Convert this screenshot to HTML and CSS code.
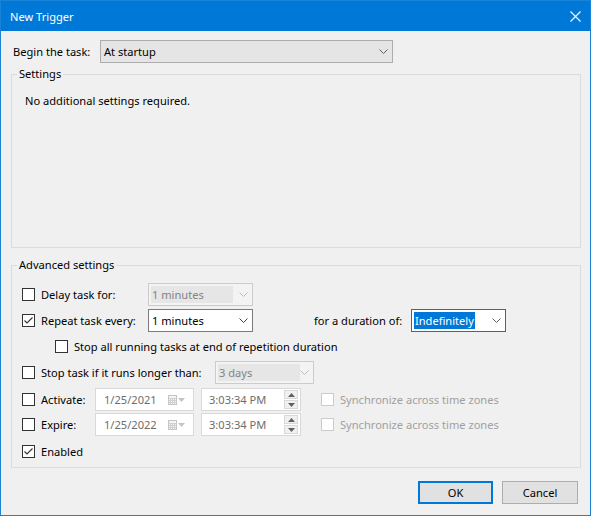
FILE: index.html
```html
<!DOCTYPE html>
<html lang="en">
<head>
  <meta charset="UTF-8">
  <title>New Trigger</title>
  <link rel="stylesheet" href="styles.css">
</head>
<body>

<div class="window">
  <!-- title bar -->
  <div class="titlebar">
    <span>New Trigger</span>
    <svg class="close" width="11" height="11" viewBox="0 0 11 11">
      <path d="M0.5 0.5 L10.5 10.5 M10.5 0.5 L0.5 10.5" stroke="#fff" stroke-width="1.1" fill="none"/>
    </svg>
  </div>

  <div class="content">
    <div class="begin-row">
      <label>Begin the task:</label>
      <div class="combo combo-begin">
        <span>At startup</span>
        <svg class="chev" width="9" height="5" viewBox="0 0 9 5"><polyline points="0.5,0.5 4.5,4.5 8.5,0.5" fill="none" stroke="#606060"/></svg>
      </div>
    </div>

    <fieldset class="group group-settings">
      <legend>Settings</legend>
      <p class="note">No additional settings required.</p>
    </fieldset>

    <fieldset class="group group-advanced">
      <legend>Advanced settings</legend>
      <div class="adv">

        <div class="row row-delay">
          <div class="check w-delay"><span class="box"></span><span>Delay task for:</span></div>
          <div class="combo combo-off w-105">
            <span class="sel">1 minutes</span>
            <svg class="chev" width="9" height="5" viewBox="0 0 9 5"><polyline points="0.5,0.5 4.5,4.5 8.5,0.5" fill="none" stroke="#bcbcbc"/></svg>
          </div>
        </div>

        <div class="row row-repeat">
          <div class="check w-delay">
            <span class="box"><svg width="11" height="11" viewBox="0 0 11 11"><polyline points="1.5,5.5 4,8 9.5,2.5" fill="none" stroke="#333" stroke-width="1.1"/></svg></span>
            <span>Repeat task every:</span>
          </div>
          <div class="combo combo-on w-105">
            <span>1 minutes</span>
            <svg class="chev" width="9" height="5" viewBox="0 0 9 5"><polyline points="0.5,0.5 4.5,4.5 8.5,0.5" fill="none" stroke="#404040"/></svg>
          </div>
          <span class="duration-label">for a duration of:</span>
          <div class="combo combo-focus">
            <span class="hilite">Indefinitely</span>
            <svg class="chev" width="9" height="5" viewBox="0 0 9 5"><polyline points="0.5,0.5 4.5,4.5 8.5,0.5" fill="none" stroke="#606060"/></svg>
          </div>
        </div>

        <div class="row row-stopall">
          <div class="check"><span class="box"></span><span>Stop all running tasks at end of repetition duration</span></div>
        </div>

        <div class="row row-stoptask">
          <div class="check w-stop"><span class="box"></span><span>Stop task if it runs longer than:</span></div>
          <div class="combo combo-off w-99">
            <span class="sel">3 days</span>
            <svg class="chev" width="9" height="5" viewBox="0 0 9 5"><polyline points="0.5,0.5 4.5,4.5 8.5,0.5" fill="none" stroke="#bcbcbc"/></svg>
          </div>
        </div>

        <div class="row row-activate">
          <div class="check w-date"><span class="box"></span><span>Activate:</span></div>
          <div class="field date">
            <span>1/25/2021</span>
            <span class="cal">
              <svg width="9" height="10" viewBox="0 0 9 10">
                <rect x="0.5" y="0.5" width="8" height="9" fill="#f4f4f4" stroke="#c4c4c4"/>
                <path d="M0.5 3.5 H8.5 M0.5 5.5 H8.5 M0.5 7.5 H8.5 M2.5 3.5 V9.5 M4.5 3.5 V9.5 M6.5 3.5 V9.5" stroke="#d0d0d0"/>
              </svg>
              <svg width="7" height="4" viewBox="0 0 7 4"><polygon points="0,0 7,0 3.5,4" fill="#c4c4c4"/></svg>
            </span>
          </div>
          <div class="field time">
            <span>3:03:34 PM</span>
            <span class="spin">
              <span class="spin-btn"><svg width="7" height="4" viewBox="0 0 7 4"><polygon points="0,4 7,4 3.5,0" fill="#606060"/></svg></span>
              <span class="spin-btn"><svg width="7" height="4" viewBox="0 0 7 4"><polygon points="0,0 7,0 3.5,4" fill="#606060"/></svg></span>
            </span>
          </div>
          <div class="check sync"><span class="box box-off"></span><span>Synchronize across time zones</span></div>
        </div>

        <div class="row row-expire">
          <div class="check w-date"><span class="box"></span><span>Expire:</span></div>
          <div class="field date">
            <span>1/25/2022</span>
            <span class="cal">
              <svg width="9" height="10" viewBox="0 0 9 10">
                <rect x="0.5" y="0.5" width="8" height="9" fill="#f4f4f4" stroke="#c4c4c4"/>
                <path d="M0.5 3.5 H8.5 M0.5 5.5 H8.5 M0.5 7.5 H8.5 M2.5 3.5 V9.5 M4.5 3.5 V9.5 M6.5 3.5 V9.5" stroke="#d0d0d0"/>
              </svg>
              <svg width="7" height="4" viewBox="0 0 7 4"><polygon points="0,0 7,0 3.5,4" fill="#c4c4c4"/></svg>
            </span>
          </div>
          <div class="field time">
            <span>3:03:34 PM</span>
            <span class="spin">
              <span class="spin-btn"><svg width="7" height="4" viewBox="0 0 7 4"><polygon points="0,4 7,4 3.5,0" fill="#606060"/></svg></span>
              <span class="spin-btn"><svg width="7" height="4" viewBox="0 0 7 4"><polygon points="0,0 7,0 3.5,4" fill="#606060"/></svg></span>
            </span>
          </div>
          <div class="check sync"><span class="box box-off"></span><span>Synchronize across time zones</span></div>
        </div>

        <div class="row row-enabled">
          <div class="check">
            <span class="box"><svg width="11" height="11" viewBox="0 0 11 11"><polyline points="1.5,5.5 4,8 9.5,2.5" fill="none" stroke="#333" stroke-width="1.1"/></svg></span>
            <span>Enabled</span>
          </div>
        </div>

      </div>
    </fieldset>

    <div class="buttons">
      <button class="btn btn-default">OK</button>
      <button class="btn btn-cancel">Cancel</button>
    </div>
  </div>
</div>

</body>
</html>
```

FILE: styles.css
```css
* {
  box-sizing: border-box;
}
body {
  margin: 0;
  font-family: "Noto Sans", sans-serif;
  font-size: 11.1px;
  color: #000;
  background-color: #f0f0f0;
}
.window {
  width: 591px;
  height: 516px;
  border: 1px solid #1883d7;
  background-color: #f0f0f0;
}
.titlebar {
  height: 30px;
  background-color: #0078d7;
  color: #fff;
  display: flex;
  align-items: center;
  justify-content: space-between;
  padding: 0 9px 0 9px;
}
.content {
  padding: 9px 9px 0 10px;
}

/* begin the task */
.begin-row {
  display: flex;
  align-items: center;
  height: 23px;
  padding-left: 2px;
}
.begin-row label {
  width: 87px;
}
.combo {
  display: flex;
  align-items: center;
  justify-content: space-between;
  height: 23px;
  border: 1px solid #adadad;
  padding: 0 4px 0 3px;
}
.combo-begin {
  width: 293px;
  background-color: #e5e5e5;
}
.combo-on {
  background-color: #fff;
  border-color: #7a7a7a;
}
.combo-off {
  background-color: #f3f3f3;
  border-color: #cccccc;
  color: #838383;
  padding-left: 2px;
}
.combo-off .sel {
  background-color: #e6e6e6;
  width: 82px;
  height: 17px;
  line-height: 17px;
  padding-left: 1px;
}
.combo-focus {
  width: 95px;
  border-color: #0078d7;
  background-color: #fff;
  padding-left: 2px;
}
.hilite {
  background-color: #0078d7;
  color: #fff;
  line-height: 17px;
  padding: 0 1px;
}
.w-105 {
  width: 105px;
}
.w-99 {
  width: 99px;
}

/* group boxes */
.group {
  margin: 0;
  padding: 0;
  border: 1px solid #dcdcdc;
}
.group legend {
  margin-left: 5px;
  padding: 0 2px;
  line-height: 16px;
}
.group-settings {
  margin-top: 3px;
  height: 182px;
}
.note {
  margin: 0;
  padding: 11px 0 0 13px;
  line-height: 16px;
}
.group-advanced {
  margin-top: 9px;
  height: 211px;
}
.adv {
  padding: 10px 0 0 10px;
}

/* rows */
.row {
  display: flex;
  align-items: center;
  height: 23px;
}
.row-repeat {
  margin-top: 3px;
}
.row-stopall {
  margin-top: 6px;
  height: 16px;
  padding-left: 33px;
}
.row-stoptask {
  margin-top: 7px;
}
.row-activate {
  margin-top: 4px;
}
.row-expire {
  margin-top: 2px;
}
.row-enabled {
  margin-top: 7px;
  height: 16px;
}
.check {
  display: flex;
  align-items: center;
  gap: 6px;
}
.w-delay {
  width: 126px;
}
.w-stop {
  width: 193px;
}
.w-date {
  width: 73px;
}
.box {
  width: 13px;
  height: 13px;
  border: 1px solid #333;
  background-color: #fff;
  display: flex;
  align-items: center;
  justify-content: center;
  flex-shrink: 0;
}
.box-off {
  border-color: #cccccc;
}
.sync {
  margin-left: 20px;
  color: #a0a0a0;
}
.duration-label {
  margin-left: 61px;
  width: 97px;
}

/* date and time pickers */
.field {
  display: flex;
  align-items: center;
  justify-content: space-between;
  height: 23px;
  border: 1px solid #d9d9d9;
  background-color: #fff;
  color: #6d6d6d;
}
.date {
  width: 99px;
  padding: 0 8px 0 8px;
}
.time {
  width: 100px;
  margin-left: 7px;
  padding: 0 2px 0 7px;
}
.cal {
  display: flex;
  align-items: center;
  gap: 1px;
}
.spin {
  display: flex;
  flex-direction: column;
  gap: 1px;
}
.spin-btn {
  width: 14px;
  height: 9px;
  border: 1px solid #d9d9d9;
  background-color: #f0f0f0;
  display: flex;
  align-items: center;
  justify-content: center;
}

/* dialog buttons */
.buttons {
  display: flex;
  justify-content: flex-end;
  gap: 9px;
  margin-top: 13px;
  padding-right: 3px;
}
.btn {
  font-family: inherit;
  font-size: inherit;
  height: 23px;
  width: 75px;
  background-color: #e1e1e1;
  border: 1px solid #adadad;
  color: #000;
  padding: 0;
}
.btn-default {
  border: 2px solid #0078d7;
}
.btn-cancel {
  width: 76px;
}
```
